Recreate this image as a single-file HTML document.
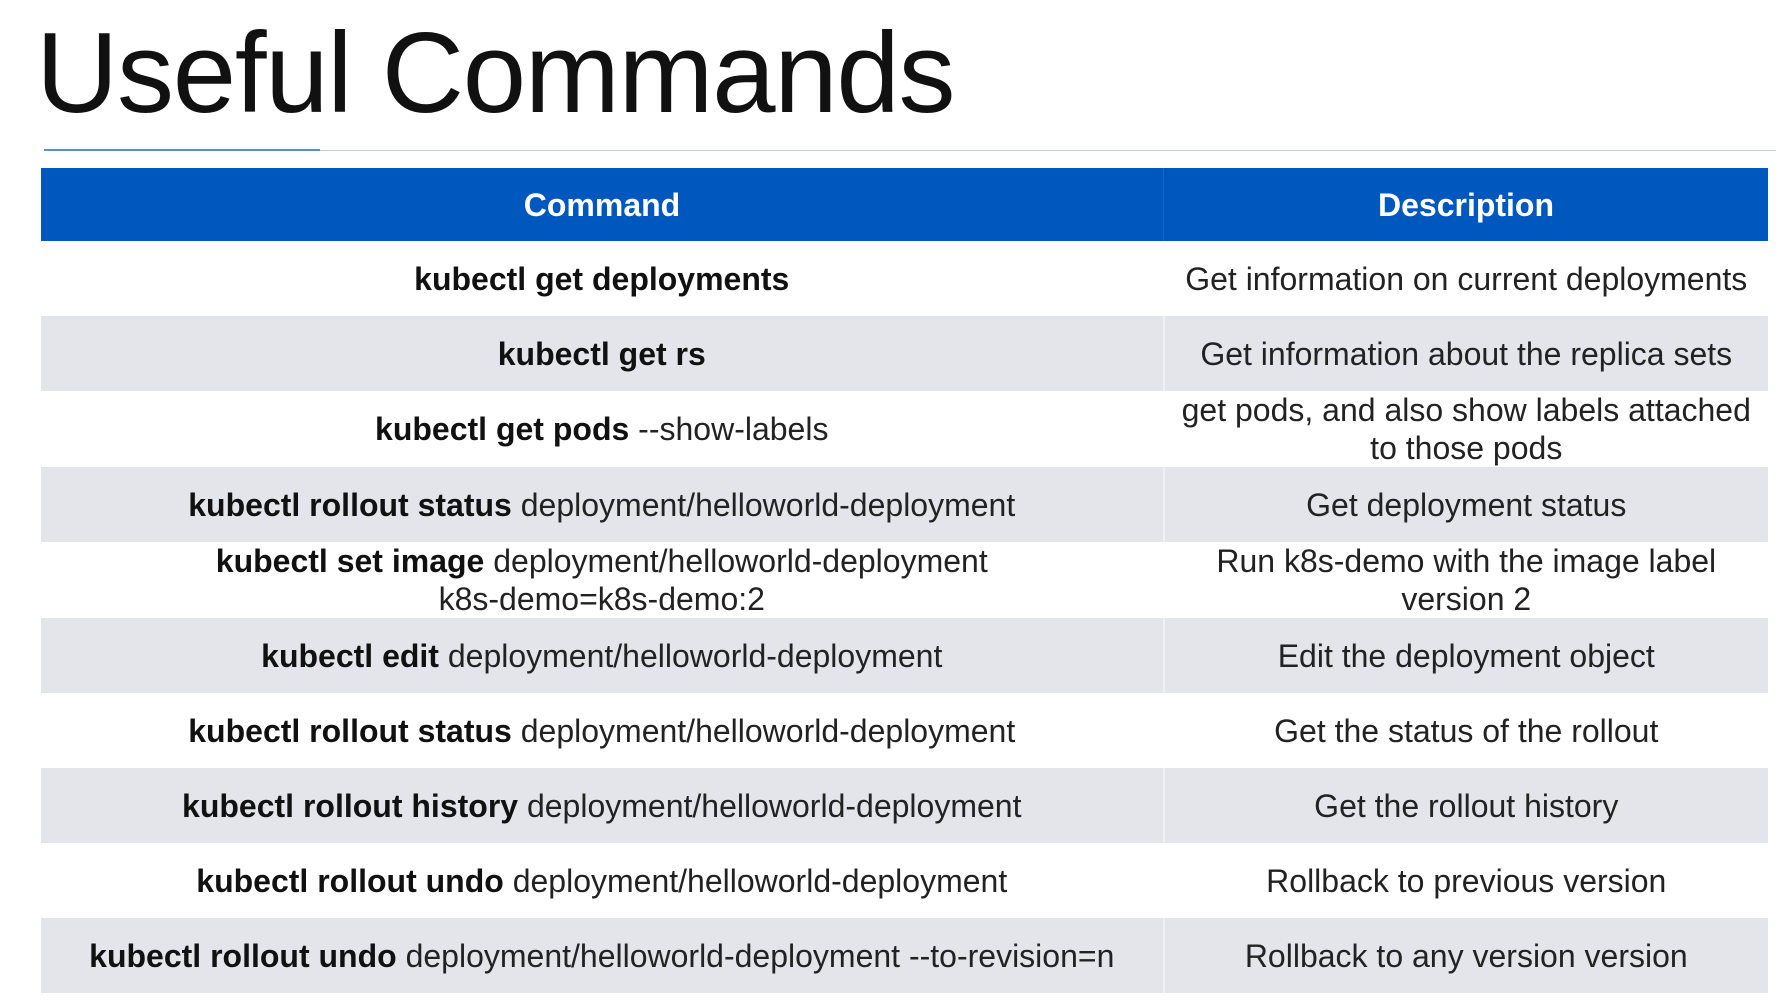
<!DOCTYPE html>
<html><head><meta charset="utf-8"><style>
body{margin:0;width:1788px;height:1001px;background:#fff;font-family:"Liberation Sans",sans-serif;overflow:hidden;position:relative}
.t{position:absolute;left:36px;top:8px;font-size:114px;color:#111;letter-spacing:-1.3px;margin:0;font-weight:normal}
.l1{position:absolute;left:44px;top:149px;width:276px;height:2px;background:#5b8fd0}
.l2{position:absolute;left:320px;top:150px;width:1456px;height:1px;background:#c8ccd4}
table{position:absolute;left:41px;top:168px;width:1727px;border-collapse:collapse;table-layout:fixed}
td,th{padding:0;text-align:center;font-size:32px;color:#222;line-height:38px}
th{background:#0058be;color:#fff;height:73px;font-size:32px}
td{height:75px}
tr.g td{background:#e4e5ea}
td:first-child,th:first-child{width:1122px}
td:last-child,th:last-child{border-left:2px solid #fff}
tr.g td:last-child{border-left:2px solid #f0f0f3}
th:last-child{border-left:1px solid #1a64c4}
b{color:#111}
</style></head><body>
<h1 class="t">Useful Commands</h1>
<div class="l1"></div><div class="l2"></div>
<table>
<tr><th>Command</th><th>Description</th></tr>
<tr><td><b>kubectl get deployments</b></td><td>Get information on current deployments</td></tr>
<tr class="g"><td><b>kubectl get rs</b></td><td>Get information about the replica sets</td></tr>
<tr><td><b>kubectl get pods</b> --show-labels</td><td>get pods, and also show labels attached<br>to those pods</td></tr>
<tr class="g"><td><b>kubectl rollout status</b> deployment/helloworld-deployment</td><td>Get deployment status</td></tr>
<tr><td><b>kubectl set image</b> deployment/helloworld-deployment<br>k8s-demo=k8s-demo:2</td><td>Run k8s-demo with the image label<br>version 2</td></tr>
<tr class="g"><td><b>kubectl edit</b> deployment/helloworld-deployment</td><td>Edit the deployment object</td></tr>
<tr><td><b>kubectl rollout status</b> deployment/helloworld-deployment</td><td>Get the status of the rollout</td></tr>
<tr class="g"><td><b>kubectl rollout history</b> deployment/helloworld-deployment</td><td>Get the rollout history</td></tr>
<tr><td><b>kubectl rollout undo</b> deployment/helloworld-deployment</td><td>Rollback to previous version</td></tr>
<tr class="g"><td><b>kubectl rollout undo</b> deployment/helloworld-deployment --to-revision=n</td><td>Rollback to any version version</td></tr>
</table>
</body></html>
